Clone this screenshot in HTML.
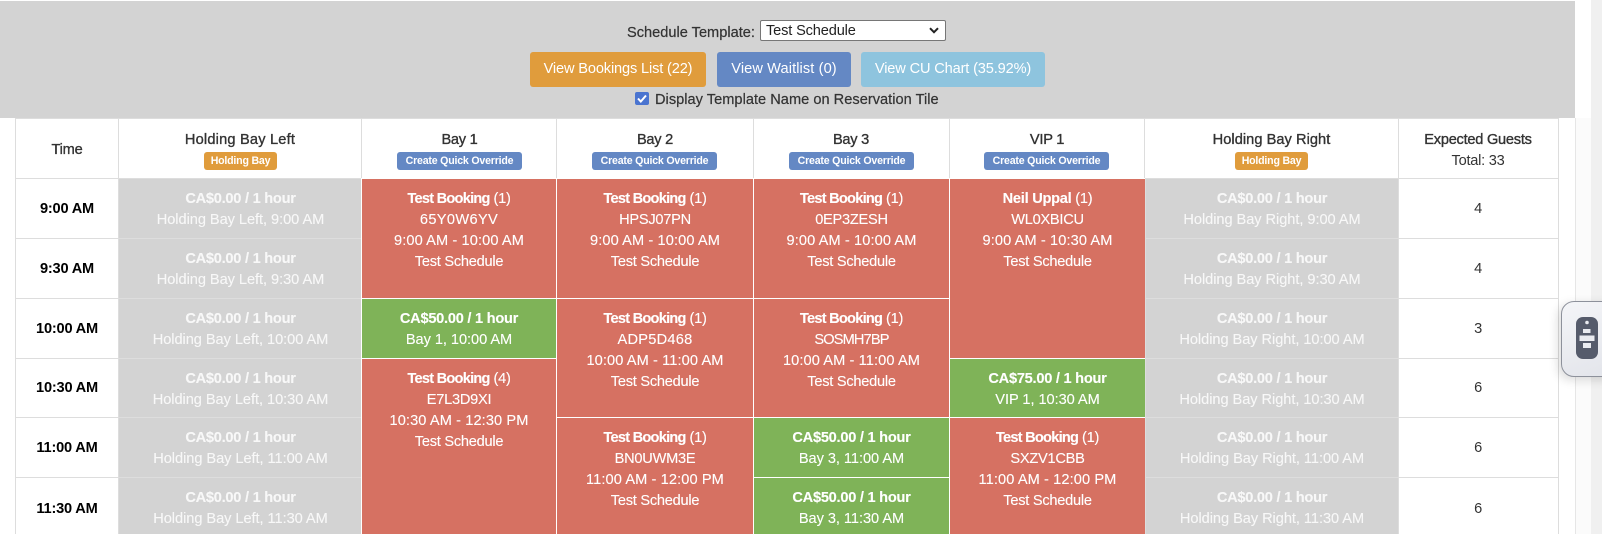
<!DOCTYPE html>
<html><head><meta charset="utf-8"><style>
html,body{margin:0;padding:0;width:1602px;height:534px;overflow:hidden;background:#fff}
body{position:relative;font-family:"Liberation Sans",sans-serif;font-size:14.6px;line-height:21px;color:#333;letter-spacing:-.25px}
div{position:absolute;box-sizing:border-box}
.c{text-align:center;padding-top:10px;color:#fff;border-top:1px solid #fff;border-left:1px solid #fff;-webkit-text-stroke:.12px #fff}
.g{background:#d3d3d3;color:#f8f8f8;left:118px;width:244px;height:60px;border-top:1px solid #ddd;border-left:1px solid #ddd;-webkit-text-stroke:.12px #f8f8f8}
.rt{left:1145px;width:253px}
.r{background:#d67162}.v{background:#7fb358}
.b{height:18px;top:152px;border-radius:3px;color:#fff;font-size:10.6px;font-weight:700;line-height:18px;text-align:center;letter-spacing:-.2px}
.q{background:#6488c4;width:125px}.h{background:#e09c3c;width:73px}
.t{top:130px;text-align:center;-webkit-text-stroke:.35px #333}
.tm{left:16px;width:102px;text-align:center;color:#000;font-weight:700;letter-spacing:-.2px;height:60px;padding-top:21px}
.n{left:1398px;width:160px;text-align:center;height:60px;padding-top:21px}
.l{background:#ddd}
.btn{top:52px;height:35px;border-radius:3px;color:#fff;text-align:center;line-height:35px;letter-spacing:-.15px}
.d{letter-spacing:.1px}
.e{letter-spacing:-.05px}
.k{letter-spacing:-.75px}
</style></head><body>
<div style="left:1591px;top:0;width:11px;height:534px;background:#f0f0f0"></div>
<div style="left:1575px;top:118px;width:16px;height:416px;background:#fbfbfb;border-left:1px solid #e6e6e6"></div>
<div style="left:0;top:1px;width:1575px;height:117px;background:#d3d3d3"></div>

<div style="left:627px;top:23px;width:135px;white-space:nowrap;letter-spacing:0;-webkit-text-stroke:.2px #333">Schedule Template:</div>
<div style="left:760px;top:20px;width:186px;height:21px;background:#fff;border:1px solid #767676;border-radius:2px;color:#222;padding-left:5px;line-height:20px;white-space:nowrap;letter-spacing:-.15px">Test Schedule<svg style="position:absolute;right:6px;top:6px" width="10" height="7" viewBox="0 0 10 7"><path d="M1 1.2l4 4 4-4" fill="none" stroke="#222" stroke-width="2"/></svg></div>

<div class="btn" style="left:530px;width:176px;background:#e09c3c">View Bookings List (22)</div>
<div class="btn" style="left:717px;width:134px;background:#6488c4;letter-spacing:.1px">View Waitlist (0)</div>
<div class="btn" style="left:861px;width:184px;background:#8ec4de">View CU Chart (35.92%)</div>

<div style="left:635px;top:92px;width:14px;height:13px;background:#4a74d0;border-radius:2px"><svg style="position:absolute;left:0;top:0" width="14" height="13" viewBox="0 0 14 13"><path d="M3 6.5l2.8 3L11 3.5" fill="none" stroke="#fff" stroke-width="2"/></svg></div>
<div style="left:655px;top:90px;white-space:nowrap;letter-spacing:.02px;-webkit-text-stroke:.2px #333">Display Template Name on Reservation Tile</div>

<!-- header cells -->
<div class="l" style="left:15px;top:118px;width:1px;height:416px"></div>
<div class="l" style="left:118px;top:118px;width:1px;height:60px"></div>
<div class="l" style="left:361px;top:118px;width:1px;height:60px"></div>
<div class="l" style="left:556px;top:118px;width:1px;height:60px"></div>
<div class="l" style="left:753px;top:118px;width:1px;height:60px"></div>
<div class="l" style="left:949px;top:118px;width:1px;height:60px"></div>
<div class="l" style="left:1144px;top:118px;width:1px;height:60px"></div>
<div class="l" style="left:1398px;top:118px;width:1px;height:416px"></div>
<div class="l" style="left:1558px;top:118px;width:1px;height:416px"></div>
<div class="l" style="left:15px;top:118px;width:1543px;height:1px"></div>
<div class="l" style="left:15px;top:178px;width:1543px;height:1px"></div>

<div class="t" style="left:16px;width:102px;top:140px">Time</div>
<div class="t" style="left:118px;width:244px;letter-spacing:.2px">Holding Bay Left</div>
<div class="t" style="left:362px;width:195px">Bay 1</div>
<div class="t" style="left:557px;width:196px">Bay 2</div>
<div class="t" style="left:753px;width:196px">Bay 3</div>
<div class="t" style="left:949px;width:196px">VIP 1</div>
<div class="t" style="left:1145px;width:253px;letter-spacing:.05px">Holding Bay Right</div>
<div class="t" style="left:1398px;width:160px">Expected Guests</div>
<div style="left:1398px;width:160px;top:151px;text-align:center">Total: 33</div>

<div class="b h" style="left:204px">Holding Bay</div>
<div class="b q" style="left:397px">Create Quick Override</div>
<div class="b q" style="left:592px">Create Quick Override</div>
<div class="b q" style="left:789px">Create Quick Override</div>
<div class="b q" style="left:984px">Create Quick Override</div>
<div class="b h" style="left:1235px">Holding Bay</div>

<!-- rows lines -->
<div class="l" style="left:15px;top:238px;width:103px;height:1px"></div>
<div class="l" style="left:15px;top:298px;width:103px;height:1px"></div>
<div class="l" style="left:15px;top:358px;width:103px;height:1px"></div>
<div class="l" style="left:15px;top:417px;width:103px;height:1px"></div>
<div class="l" style="left:15px;top:477px;width:103px;height:1px"></div>
<div class="l" style="left:1398px;top:238px;width:160px;height:1px"></div>
<div class="l" style="left:1398px;top:298px;width:160px;height:1px"></div>
<div class="l" style="left:1398px;top:358px;width:160px;height:1px"></div>
<div class="l" style="left:1398px;top:417px;width:160px;height:1px"></div>
<div class="l" style="left:1398px;top:477px;width:160px;height:1px"></div>
<div class="l" style="left:118px;top:178px;width:1px;height:356px"></div>

<!-- time -->
<div class="tm" style="top:178px">9:00 AM</div>
<div class="tm" style="top:238px">9:30 AM</div>
<div class="tm" style="top:298px">10:00 AM</div>
<div class="tm" style="top:357px">10:30 AM</div>
<div class="tm" style="top:417px">11:00 AM</div>
<div class="tm" style="top:478px">11:30 AM</div>

<!-- holding left -->
<div class="c g" style="top:178px"><b>CA$0.00 / 1 hour</b><br><span class="e">Holding Bay Left, 9:00 AM</span></div>
<div class="c g" style="top:238px"><b>CA$0.00 / 1 hour</b><br><span class="e">Holding Bay Left, 9:30 AM</span></div>
<div class="c g" style="top:298px"><b>CA$0.00 / 1 hour</b><br><span class="e">Holding Bay Left, 10:00 AM</span></div>
<div class="c g" style="top:358px"><b>CA$0.00 / 1 hour</b><br><span class="e">Holding Bay Left, 10:30 AM</span></div>
<div class="c g" style="top:417px"><b>CA$0.00 / 1 hour</b><br><span class="e">Holding Bay Left, 11:00 AM</span></div>
<div class="c g" style="top:477px"><b>CA$0.00 / 1 hour</b><br><span class="e">Holding Bay Left, 11:30 AM</span></div>

<!-- holding right -->
<div class="c g rt" style="top:178px"><b>CA$0.00 / 1 hour</b><br><span class="e">Holding Bay Right, 9:00 AM</span></div>
<div class="c g rt" style="top:238px"><b>CA$0.00 / 1 hour</b><br><span class="e">Holding Bay Right, 9:30 AM</span></div>
<div class="c g rt" style="top:298px"><b>CA$0.00 / 1 hour</b><br><span class="e">Holding Bay Right, 10:00 AM</span></div>
<div class="c g rt" style="top:358px"><b>CA$0.00 / 1 hour</b><br><span class="e">Holding Bay Right, 10:30 AM</span></div>
<div class="c g rt" style="top:417px"><b>CA$0.00 / 1 hour</b><br><span class="e">Holding Bay Right, 11:00 AM</span></div>
<div class="c g rt" style="top:477px"><b>CA$0.00 / 1 hour</b><br><span class="e">Holding Bay Right, 11:30 AM</span></div>

<!-- bay 1 -->
<div class="c r" style="left:361px;width:195px;top:178px;height:120px"><b class="k">Test Booking</b> (1)<br><span style="letter-spacing:.35px">65Y0W6YV</span><br><span class="d">9:00 AM - 10:00 AM</span><br>Test Schedule</div>
<div class="c v" style="left:361px;width:195px;top:298px;height:60px"><b>CA$50.00 / 1 hour</b><br><span class="e">Bay 1, 10:00 AM</span></div>
<div class="c r" style="left:361px;width:195px;top:358px;height:176px"><b class="k">Test Booking</b> (4)<br>E7L3D9XI<br><span class="d">10:30 AM - 12:30 PM</span><br>Test Schedule</div>

<!-- bay 2 -->
<div class="c r" style="left:556px;width:197px;top:178px;height:120px"><b class="k">Test Booking</b> (1)<br>HPSJ07PN<br><span class="d">9:00 AM - 10:00 AM</span><br>Test Schedule</div>
<div class="c r" style="left:556px;width:197px;top:298px;height:119px"><b class="k">Test Booking</b> (1)<br><span style="letter-spacing:.25px">ADP5D468</span><br><span class="d">10:00 AM - 11:00 AM</span><br>Test Schedule</div>
<div class="c r" style="left:556px;width:197px;top:417px;height:117px"><b class="k">Test Booking</b> (1)<br>BN0UWM3E<br><span class="d">11:00 AM - 12:00 PM</span><br>Test Schedule</div>

<!-- bay 3 -->
<div class="c r" style="left:753px;width:196px;top:178px;height:120px"><b class="k">Test Booking</b> (1)<br>0EP3ZESH<br><span class="d">9:00 AM - 10:00 AM</span><br>Test Schedule</div>
<div class="c r" style="left:753px;width:196px;top:298px;height:119px"><b class="k">Test Booking</b> (1)<br><span style="letter-spacing:-.85px">SOSMH7BP</span><br><span class="d">10:00 AM - 11:00 AM</span><br>Test Schedule</div>
<div class="c v" style="left:753px;width:196px;top:417px;height:60px"><b>CA$50.00 / 1 hour</b><br><span class="e">Bay 3, 11:00 AM</span></div>
<div class="c v" style="left:753px;width:196px;top:477px;height:57px"><b>CA$50.00 / 1 hour</b><br><span class="e">Bay 3, 11:30 AM</span></div>

<!-- vip -->
<div class="c r" style="left:949px;width:196px;top:178px;height:180px"><b>Neil Uppal</b> (1)<br>WL0XBICU<br><span class="d">9:00 AM - 10:30 AM</span><br>Test Schedule</div>
<div class="c v" style="left:949px;width:196px;top:358px;height:59px"><b>CA$75.00 / 1 hour</b><br><span class="e">VIP 1, 10:30 AM</span></div>
<div class="c r" style="left:949px;width:196px;top:417px;height:117px"><b class="k">Test Booking</b> (1)<br>SXZV1CBB<br><span class="d">11:00 AM - 12:00 PM</span><br>Test Schedule</div>

<!-- guests -->
<div class="n" style="top:178px">4</div>
<div class="n" style="top:238px">4</div>
<div class="n" style="top:298px">3</div>
<div class="n" style="top:357px">6</div>
<div class="n" style="top:417px">6</div>
<div class="n" style="top:478px">6</div>

<!-- widget -->
<div style="left:1561px;top:301px;width:60px;height:76px;border:1px solid #8d919b;border-radius:13px;background:linear-gradient(160deg,#f4f5f8,#e2e4ea);box-shadow:-3px 3px 10px rgba(0,0,0,.14)"></div>
<svg style="position:absolute;left:1575px;top:316px" width="24" height="44" viewBox="0 0 24 44">
<rect x="1" y="1" width="22" height="42" rx="7" fill="#555b6b"/>
<circle cx="12" cy="6.5" r="1.8" fill="#e9ebf0"/>
<rect x="8" y="13" width="7.5" height="4" fill="#e9ebf0"/>
<rect x="4.5" y="19.5" width="15" height="5.5" fill="#e9ebf0"/>
<rect x="8" y="27" width="8" height="5" fill="#e9ebf0"/>
</svg>
</body></html>
